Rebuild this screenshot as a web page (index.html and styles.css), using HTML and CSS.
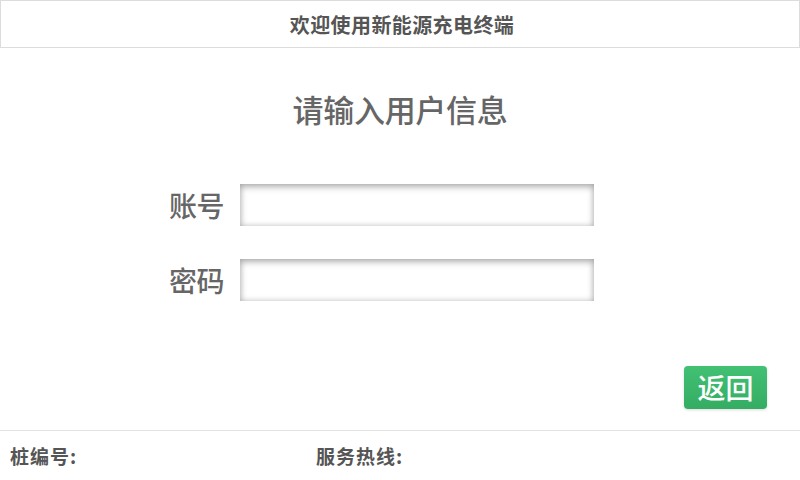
FILE: index.html
```html
<!DOCTYPE html>
<html lang="zh-CN">
<head>
    <meta charset="UTF-8">
    <title>新能源充电终端</title>
    <link rel="stylesheet" href="styles.css">
</head>
<body>
    <header class="top-bar">
        <h1 class="welcome">欢迎使用新能源充电终端</h1>
    </header>

    <div class="main">
        <h2 class="page-title">请输入用户信息</h2>
        <form class="login-form">
            <div class="form-row">
                <label for="account">账号</label>
                <input type="text" id="account" name="account">
            </div>
            <div class="form-row">
                <label for="password">密码</label>
                <input type="password" id="password" name="password">
            </div>
        </form>
        <div class="actions">
            <button type="button" class="btn-back">返回</button>
        </div>
    </div>

    <footer class="bottom-bar">
        <span class="pile-no">桩编号:</span>
        <span class="hotline">服务热线:</span>
    </footer>
</body>
</html>
```

FILE: styles.css
```css
body {
    margin: 0;
    padding: 0;
    width: 800px;
    height: 480px;
    background: #fff;
    font-family: "Noto Sans CJK SC", "Noto Sans", sans-serif;
    display: flex;
    flex-direction: column;
    overflow: hidden;
}

/* Header */
.top-bar {
    height: 46px;
    border: 1px solid #dcdcdc;
    display: flex;
    align-items: center;
    justify-content: center;
}
.welcome {
    margin: 0;
    font-size: 20px;
    font-weight: 700;
    color: #555;
    letter-spacing: 0.4px;
    padding-left: 4px;
}

/* Main area */
.main {
    flex: 1;
    display: flex;
    flex-direction: column;
}
.page-title {
    margin: 38px 0 0;
    text-align: center;
    font-size: 31px;
    font-weight: 500;
    color: #666;
    line-height: 46px;
    letter-spacing: -0.3px;
}

.login-form {
    margin-top: 52px;
    display: flex;
    flex-direction: column;
    gap: 33px;
    padding-left: 169px;
}
.form-row {
    display: flex;
    align-items: center;
    gap: 13px;
}
.form-row label {
    font-size: 28px;
    font-weight: 500;
    color: #666;
    width: 58px;
    letter-spacing: -0.5px;
}
.form-row input {
    width: 354px;
    height: 42px;
    box-sizing: border-box;
    border: none;
    background: #fff;
    box-shadow: inset 0 3px 7px rgba(0, 0, 0, 0.26), inset 0 0 6px rgba(0, 0, 0, 0.18);
    outline: none;
    padding: 0 8px;
    font-size: 18px;
}

.actions {
    display: flex;
    justify-content: flex-end;
    padding-right: 33px;
    margin-top: 65px;
}
.btn-back {
    width: 83px;
    height: 43px;
    border: none;
    border-radius: 4px;
    background: linear-gradient(#42c073, #34ad63);
    color: #fff;
    font-family: inherit;
    font-size: 28px;
    font-weight: 500;
    line-height: 43px;
    padding: 0;
    box-shadow: 0 1px 3px rgba(0, 0, 0, 0.15);
}

/* Footer */
.bottom-bar {
    height: 49px;
    border-top: 1px solid #e2e2e2;
    display: flex;
    align-items: center;
    padding-left: 10px;
}
.bottom-bar span {
    font-size: 19px;
    font-weight: 700;
    color: #555;
    letter-spacing: 1px;
}
.pile-no {
    width: 306px;
}
```
